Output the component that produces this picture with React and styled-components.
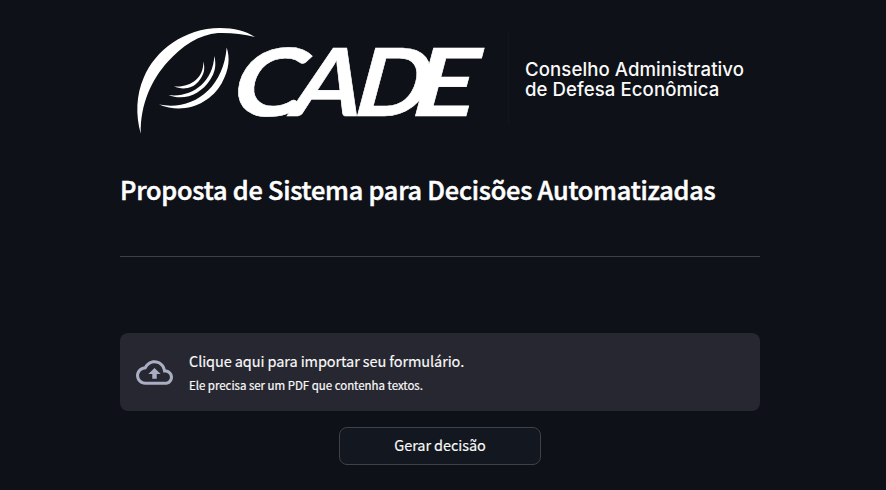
import React from "react";
import styled, { createGlobalStyle } from "styled-components";

const GlobalStyle = createGlobalStyle`
  * { box-sizing: border-box; }
  html, body { margin: 0; background: #0e1117; }
  body {
    color: #fafafa;
    font-family: "Noto Sans CJK SC", "Noto Sans", sans-serif;
    overflow: hidden;
  }
`;

const Page = styled.main`
  width: 640px;
  height: 490px;
  margin-left: 120px;
  display: flex;
  flex-direction: column;
`;

const Brand = styled.header`
  display: flex;
  height: 140px;
  padding: 20px 0 0 10px;
`;

const Logo = styled.svg`
  width: 365px;
  height: 120px;
  flex: none;
  fill: #ffffff;
`;

const Letter = styled.text`
  font-family: Lato, sans-serif;
  font-size: 94px;
  font-weight: 700;
  stroke: #ffffff;
  stroke-width: 0.6px;
  stroke-linejoin: miter;
`;

const BrandRule = styled.div`
  width: 1px;
  height: 92px;
  margin: 13px 16px 0 13px;
  background: #12151a;
`;

const Tagline = styled.div`
  padding-top: 39px;
  font-family: Inter, sans-serif;
  font-size: 18.6px;
  font-weight: 500;
  line-height: 20px;
  letter-spacing: 0.08px;
  white-space: nowrap;
`;

const TagLine = styled.div``;

const Title = styled.h1`
  margin: 28px 0 0;
  height: 42px;
  font-size: 25.3px;
  font-weight: 500;
  line-height: 42px;
  letter-spacing: -0.22px;
  color: #ffffff;
  -webkit-text-stroke: 0.5px currentColor;
  white-space: nowrap;
`;

const Divider = styled.hr`
  width: 100%;
  height: 1px;
  margin: 46px 0 76px;
  border: 0;
  background: #3d4045;
`;

const Dropzone = styled.section`
  display: flex;
  align-items: center;
  height: 78px;
  padding: 0 16px;
  gap: 16px;
  border-radius: 8px;
  background: #262730;
`;

const CloudIcon = styled.svg`
  width: 37px;
  height: 37px;
  fill: #a9aec2;
`;

const DropText = styled.div`
  display: flex;
  flex-direction: column;
  white-space: nowrap;
`;

const DropTitle = styled.span`
  font-size: 14.5px;
  line-height: 26px;
  letter-spacing: -0.09px;
  -webkit-text-stroke: 0.15px currentColor;
`;

const DropHint = styled.span`
  font-size: 11.5px;
  line-height: 22px;
  letter-spacing: -0.03px;
  -webkit-text-stroke: 0.2px currentColor;
`;

const Submit = styled.button`
  align-self: center;
  width: 202px;
  height: 38px;
  margin: 16px 0 0;
  padding: 0 0 2px;
  border: 1px solid #3e4147;
  border-radius: 8px;
  background: #131720;
  color: inherit;
  font-family: inherit;
  font-size: 14.5px;
  line-height: 34px;
  letter-spacing: -0.08px;
  -webkit-text-stroke: 0.15px currentColor;
`;

const letters = [
  { char: "C", x: 226.5, scale: 1.16 },
  { char: "A", x: 287.5, scale: 1.05 },
  { char: "D", x: 349.5, scale: 1.04 },
  { char: "E", x: 406.5, scale: 1.18 },
];

function CadeLogo() {
  return (
    <Logo viewBox="130 20 365 120" role="img" aria-label="CADE">
      <path d="M140.8 133.8C135.5 115 136 95 144 77C155 51 184 28 220 28C234 28 246 31 255 37C243 34 230 32.500 218 33C199 34.500 182 46 168 61.500C152 79 140 104 140.800 133.800Z" />
      <path d="M226.700 47.500C230 58 229.500 69 221.700 83.300C210 104 184 115 159 104.500C192 111 223 90 226.700 47.500Z" />
      <path d="M214.300 56C216.500 65 215.300 72 210 80C201 94 184 101.500 168.500 95C191 98 213 83 214.300 56Z" />
      <path d="M203.300 61.500C205.500 69 204 75 198.300 81.700C192 89 182 90 174 86.300C189 88 204 79 203.300 61.500Z" />
      {letters.map((l) => (
        <Letter key={l.char} transform={`translate(${l.x} 116) skewX(-15) scale(${l.scale} 1)`}>
          {l.char}
        </Letter>
      ))}
    </Logo>
  );
}

export default function App() {
  return (
    <>
      <GlobalStyle />
      <Page>
        <Brand>
          <CadeLogo />
          <BrandRule />
          <Tagline>
            <TagLine>Conselho Administrativo</TagLine>
            <TagLine>de Defesa Econômica</TagLine>
          </Tagline>
        </Brand>
        <Title>Proposta de Sistema para Decisões Automatizadas</Title>
        <Divider />
        <Dropzone>
          <CloudIcon viewBox="0 0 24 24" aria-hidden="true">
            <path d="M19.350 10.040C18.670 6.590 15.640 4 12 4 9.110 4 6.600 5.640 5.350 8.040 2.340 8.360 0 10.910 0 14c0 3.310 2.690 6 6 6h13c2.760 0 5-2.240 5-5 0-2.640-2.050-4.780-4.650-4.960zM19 18H6c-2.210 0-4-1.790-4-4 0-2.050 1.530-3.760 3.560-3.970l1.070-.110.500-.950C8.080 7.140 9.940 6 12 6c2.620 0 4.880 1.860 5.390 4.430l.300 1.500 1.530.110c1.560.100 2.780 1.410 2.780 2.960 0 1.650-1.350 3-3 3zM8 13h2.550v3h2.900v-3H16l-4-4-4 4z" />
          </CloudIcon>
          <DropText>
            <DropTitle>Clique aqui para importar seu formulário.</DropTitle>
            <DropHint>Ele precisa ser um PDF que contenha textos.</DropHint>
          </DropText>
        </Dropzone>
        <Submit type="button">Gerar decisão</Submit>
      </Page>
    </>
  );
}
